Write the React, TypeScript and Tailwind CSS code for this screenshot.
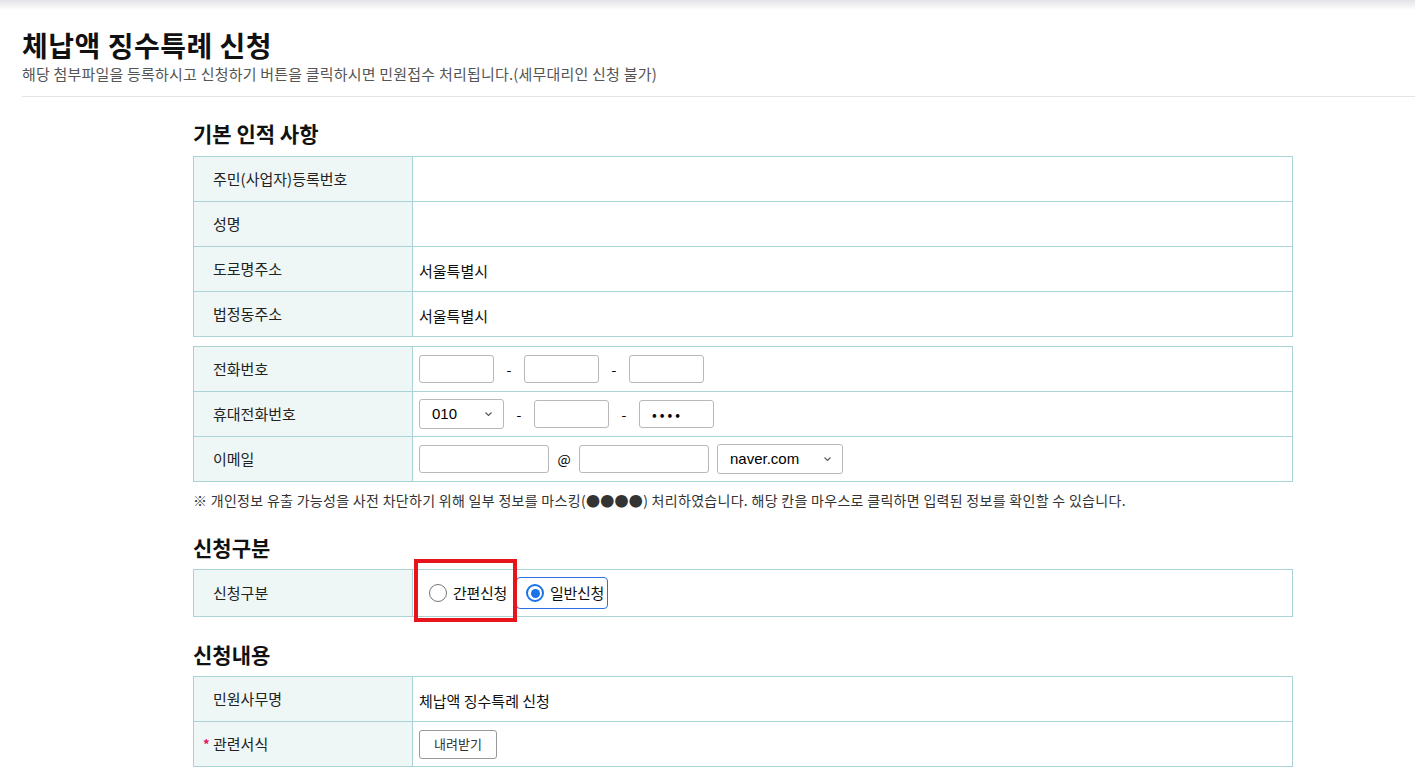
import React from "react";

const FONT = { fontFamily: '"Noto Sans CJK KR", "Noto Sans", "Liberation Sans", sans-serif' };

function Row({
  label,
  required,
  children,
  h = "h-[45px]",
}: {
  label: string;
  required?: boolean;
  children?: React.ReactNode;
  h?: string;
}) {
  return (
    <div className={`flex ${h} border-b border-[#aad3d6]`}>
      <div className="w-[219px] shrink-0 bg-[#eef7f6] border-r border-[#aad3d6] flex items-center pl-[19px] text-[15px] text-[#222]">
        {required && <span className="-ml-[10px] w-[10px] text-[#e0105a] text-[13px] font-bold">*</span>}
        {label}
      </div>
      <div className="flex-1 flex items-center pl-[6px] text-[15px] text-[#111]">{children}</div>
    </div>
  );
}

function Table({ children }: { children: React.ReactNode }) {
  return <div className="w-[1100px] border-t border-l border-r border-[#aad3d6]">{children}</div>;
}

function Heading({ children, className = "" }: { children: React.ReactNode; className?: string }) {
  return <h2 className={`text-[21px] leading-[24px] font-bold text-[#111] ${className}`}>{children}</h2>;
}

function Box({ w, type = "text", value }: { w: string; type?: string; value?: string }) {
  return (
    <input
      type={type}
      readOnly
      defaultValue={value}
      className={`${w} h-[28px] border border-[#b8b8b8] rounded-[3px] px-[12px] text-[14px] text-black tracking-[3px] outline-none`}
    />
  );
}

function Select({ w, value }: { w: string; value: string }) {
  return (
    <div
      className={`${w} h-[30px] border border-[#b8b8b8] rounded-[3px] flex items-center justify-between pl-[12px] pr-[10px] text-[15px] text-black`}
      style={{ fontFamily: '"Liberation Sans", Arial, sans-serif' }}
    >
      <span>{value}</span>
      <svg width="9" height="6" viewBox="0 0 9 6" fill="none">
        <path d="M1.5 1.5 L4.5 4.5 L7.5 1.5" stroke="#555" strokeWidth="1.1" />
      </svg>
    </div>
  );
}

function Sep({ c }: { c: string }) {
  return <span className="w-[30px] text-center text-[14px] text-black">{c}</span>;
}

function Radio({ checked, label }: { checked?: boolean; label: string }) {
  return (
    <label
      className={`flex items-center h-[32px] pl-[9px] pr-[3px] gap-[6px] rounded-[4px] border ${
        checked ? "border-[#2f6fe4]" : "border-transparent"
      }`}
    >
      {checked ? (
        <span className="w-[18px] h-[18px] rounded-full border-2 border-[#1a73e8] flex items-center justify-center">
          <span className="w-[9px] h-[9px] rounded-full bg-[#1a73e8]" />
        </span>
      ) : (
        <span className="w-[18px] h-[18px] rounded-full border border-[#767676]" />
      )}
      <span className="text-[15px] tracking-[-0.3px] text-[#111]">{label}</span>
    </label>
  );
}

export default function App() {
  return (
    <div className="min-h-screen bg-white" style={FONT}>
      <div className="h-[10px] bg-gradient-to-b from-[#e3e3e8] to-white" />

      {/* page title */}
      <div className="ml-[22px] pt-[18px] pb-[12px] border-b border-[#e4e4e4]">
        <h1 className="text-[28px] leading-[34px] font-bold tracking-[0.5px] text-[#111]">체납액 징수특례 신청</h1>
        <p className="mt-[2px] text-[15px] leading-[20px] tracking-[0.2px] text-[#555]">
          해당 첨부파일을 등록하시고 신청하기 버튼을 클릭하시면 민원접수 처리됩니다.(세무대리인 신청 불가)
        </p>
      </div>

      <div className="ml-[193px]">
        <Heading className="pt-[24px] mb-[11px]">기본 인적 사항</Heading>
        <Table>
          <Row label="주민(사업자)등록번호" />
          <Row label="성명" />
          <Row label="도로명주소">
            <span className="pt-[4px]">서울특별시</span>
          </Row>
          <Row label="법정동주소">
            <span className="pt-[4px]">서울특별시</span>
          </Row>
        </Table>

        <div className="mt-[9px]">
          <Table>
            <Row label="전화번호">
              <Box w="w-[75px]" />
              <Sep c="-" />
              <Box w="w-[75px]" />
              <Sep c="-" />
              <Box w="w-[75px]" />
            </Row>
            <Row label="휴대전화번호">
              <Select w="w-[85px]" value="010" />
              <Sep c="-" />
              <Box w="w-[75px]" />
              <Sep c="-" />
              <Box w="w-[75px]" type="password" value="0000" />
            </Row>
            <Row label="이메일">
              <Box w="w-[130px]" />
              <Sep c="@" />
              <Box w="w-[130px]" />
              <div className="ml-[8px]">
                <Select w="w-[126px]" value="naver.com" />
              </div>
            </Row>
          </Table>
        </div>

        <p className="mt-[8px] text-[14px] leading-[20px] tracking-[0.3px] text-[#333]">
          ※ 개인정보 유출 가능성을 사전 차단하기 위해 일부 정보를 마스킹(●●●●) 처리하였습니다. 해당 칸을 마우스로 클릭하면 입력된 정보를 확인할 수 있습니다.
        </p>

        <Heading className="mt-[25px] mb-[10px]">신청구분</Heading>
        <div className="relative w-[1100px]">
          <Table>
            <Row label="신청구분" h="h-[47px]">
              <div className="flex items-center gap-[5px]">
                <Radio label="간편신청" />
                <Radio checked label="일반신청" />
              </div>
            </Row>
          </Table>
          <div className="absolute left-[221px] top-[-10px] w-[103px] h-[63px] border-[4px] border-[#e8141c] pointer-events-none" />
        </div>

        <Heading className="mt-[25px] mb-[10px]">신청내용</Heading>
        <Table>
          <Row label="민원사무명">
            <span className="pt-[4px]">체납액 징수특례 신청</span>
          </Row>
          <Row label="관련서식" required>
            <button className="h-[29px] px-[14px] border border-[#999] rounded-[3px] text-[13px] text-[#333] bg-white">
              내려받기
            </button>
          </Row>
        </Table>
        <div className="h-[40px]" />
      </div>
    </div>
  );
}
